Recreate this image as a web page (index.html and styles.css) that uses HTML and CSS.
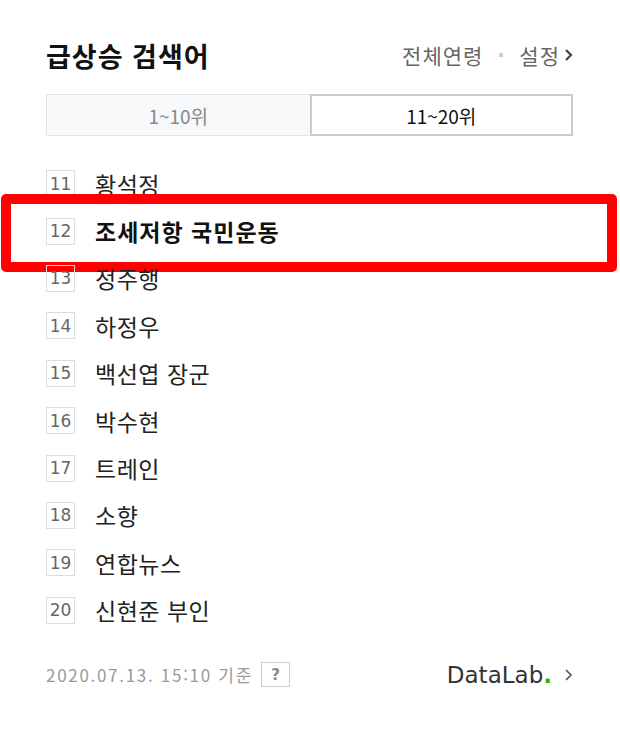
FILE: index.html
```html
<!DOCTYPE html>
<html lang="ko">
<head>
    <meta charset="UTF-8">
    <meta name="viewport" content="width=device-width, initial-scale=1.0">
    <title>급상승 검색어</title>
    <link rel="stylesheet" href="styles.css">
</head>
<body>
    <div class="rank-box">
        <div class="rank-head">
            <h1>급상승 검색어</h1>
            <div class="rank-opts">
                <span>전체연령</span>
                <span class="dot"></span>
                <span>설정</span>
                <svg class="chev" width="9" height="14" viewBox="0 0 9 14"><path d="M2 2l5 5-5 5" fill="none" stroke="#444" stroke-width="2.2"/></svg>
            </div>
        </div>

        <div class="rank-tabs">
            <a class="tab">1~10위</a>
            <a class="tab on">11~20위</a>
        </div>

        <ol class="rank-list">
            <li><span class="num">11</span><span class="kw">황석정</span></li>
            <li class="hot"><span class="num">12</span><span class="kw">조세저항 국민운동</span></li>
            <li><span class="num">13</span><span class="kw">정주행</span></li>
            <li><span class="num">14</span><span class="kw">하정우</span></li>
            <li><span class="num">15</span><span class="kw">백선엽 장군</span></li>
            <li><span class="num">16</span><span class="kw">박수현</span></li>
            <li><span class="num">17</span><span class="kw">트레인</span></li>
            <li><span class="num">18</span><span class="kw">소향</span></li>
            <li><span class="num">19</span><span class="kw">연합뉴스</span></li>
            <li><span class="num">20</span><span class="kw">신현준 부인</span></li>
        </ol>

        <div class="rank-foot">
            <div class="stamp">
                <span>2020.07.13. 15:10 기준</span>
                <span class="help">?</span>
            </div>
            <a class="datalab">DataLab<span class="g">.</span>
                <svg class="chev" width="9" height="14" viewBox="0 0 9 14"><path d="M2 2l5 5-5 5" fill="none" stroke="#555" stroke-width="1.6"/></svg>
            </a>
        </div>
    </div>
</body>
</html>
```

FILE: styles.css
```css
body {
    margin: 0;
    background: #fff;
    font-family: "Noto Sans CJK KR", "Noto Sans", sans-serif;
    color: #222;
}
.rank-box {
    width: 527px;
    margin-left: 46px;
    padding-top: 34px;
}
.rank-head {
    display: flex;
    justify-content: space-between;
    align-items: center;
    height: 42px;
}
.rank-head h1 {
    margin: 0;
    font-size: 27px;
    font-weight: 700;
    letter-spacing: 1px;
    color: #111;
}
.rank-opts {
    display: flex;
    align-items: center;
    gap: 10px;
    font-size: 21px;
    letter-spacing: 1px;
    color: #666;
}
.rank-opts .dot {
    width: 4px;
    height: 4px;
    background: #ccc;
    margin: 0 6px;
}
.rank-opts .chev { margin-left: -6px; }

.rank-tabs {
    display: grid;
    grid-template-columns: 1fr 1fr;
    margin-top: 18px;
    height: 42px;
}
.tab {
    display: flex;
    align-items: center;
    justify-content: center;
    font-size: 19px;
    color: #888;
    background: #f6f8fa;
    border: 1px solid #e2e4e6;
    border-right: none;
}
.tab.on {
    color: #111;
    background: #fff;
    border: 2px solid #ccc;
}

.rank-list {
    list-style: none;
    margin: 24px 0 0;
    padding: 0;
}
.rank-list li {
    position: relative;
    display: flex;
    align-items: center;
    height: 47.4px;
}
.rank-list .num {
    width: 27px;
    height: 25px;
    border: 1px solid #ddd;
    display: flex;
    align-items: center;
    justify-content: center;
    font-family: "DejaVu Sans", sans-serif;
    font-size: 17px;
    color: #666;
    margin-right: 20px;
}
.rank-list .kw {
    font-size: 23px;
    letter-spacing: 0.5px;
    color: #222;
}
.rank-list .hot .kw {
    font-weight: 700;
    letter-spacing: 1px;
    color: #111;
}
/* red highlight frame around the featured keyword */
.rank-list .hot::after {
    content: "";
    position: absolute;
    left: -45px;
    right: -44px;
    top: -13px;
    bottom: -17px;
    border: 10px solid #f00;
    border-radius: 5px;
}

.rank-foot {
    display: flex;
    justify-content: space-between;
    align-items: center;
    margin-top: 27px;
    height: 28px;
}
.stamp {
    display: flex;
    align-items: center;
    gap: 8px;
    font-size: 17px;
    letter-spacing: 1.7px;
    color: #999;
}
.help {
    width: 27px;
    height: 23px;
    border: 1px solid #ccc;
    display: flex;
    align-items: center;
    justify-content: center;
    font-family: "DejaVu Sans", sans-serif;
    font-size: 15px;
    font-weight: 700;
    letter-spacing: 0;
    color: #888;
}
.datalab {
    display: flex;
    align-items: center;
    font-family: "DejaVu Sans", sans-serif;
    font-size: 23px;
    color: #333;
}
.datalab .g {
    color: #2db400;
    font-weight: 700;
}
.datalab .chev { margin-left: 12px; }
```
